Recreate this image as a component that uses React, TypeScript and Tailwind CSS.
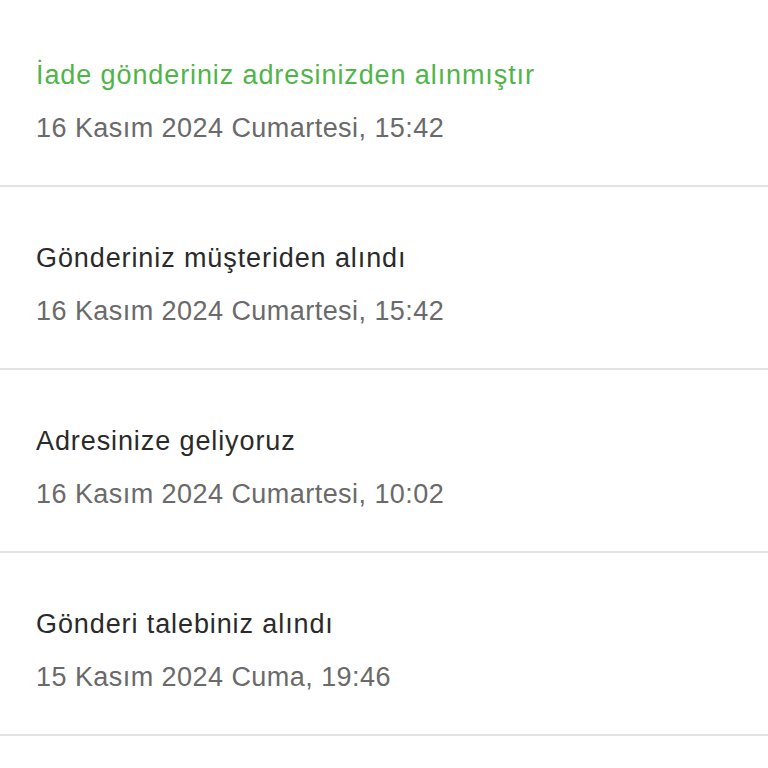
const events = [
  { title: "İade gönderiniz adresinizden alınmıştır", date: "16 Kasım 2024 Cumartesi, 15:42", active: true },
  { title: "Gönderiniz müşteriden alındı", date: "16 Kasım 2024 Cumartesi, 15:42" },
  { title: "Adresinize geliyoruz", date: "16 Kasım 2024 Cumartesi, 10:02" },
  { title: "Gönderi talebiniz alındı", date: "15 Kasım 2024 Cuma, 19:46" },
];

export default function App() {
  return (
    <div className="h-[768px] w-[768px] overflow-hidden bg-white font-['Liberation_Sans',Arial,sans-serif]">
      <ul className="pt-[4px]">
        {events.map((e, i) => (
          <li key={i} className="border-b-2 border-[#e3e3e3] pl-[36px] pt-[53px] pb-[39px]">
            <p
              className={`text-[27px] leading-[36px] tracking-[0.9px] ${
                e.active ? "text-[#4fb548]" : "text-[#2a2a2a]"
              }`}
            >
              {e.title}
            </p>
            <p className="mt-[17px] text-[27px] leading-[36px] tracking-[0.45px] text-[#6a6a6a]">{e.date}</p>
          </li>
        ))}
      </ul>
    </div>
  );
}
